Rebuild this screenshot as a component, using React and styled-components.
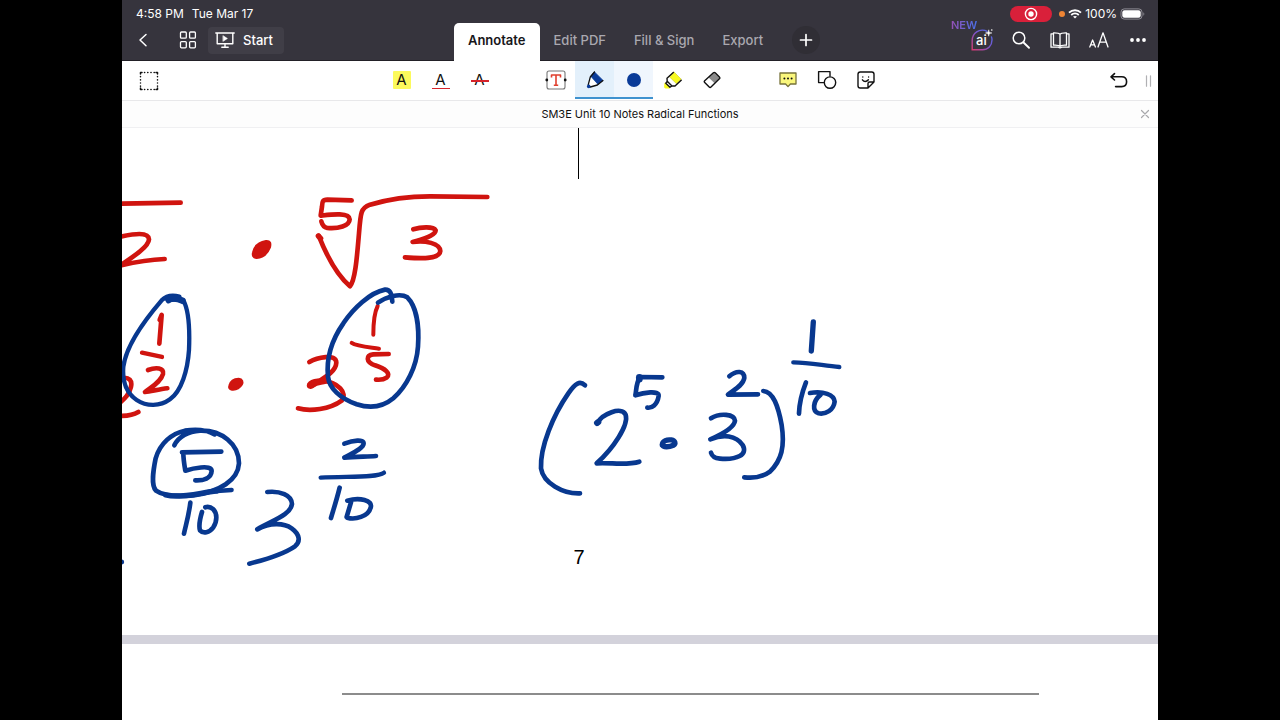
import React from "react";
import styled, { createGlobalStyle, css } from "styled-components";

const GlobalStyle = createGlobalStyle`
  *, *::before, *::after { box-sizing: border-box; }
  html, body { margin: 0; background: #000; }
  body { font-family: Inter, "Liberation Sans", sans-serif; font-size: 13px; color: #111; }
  button { font: inherit; color: inherit; border: 0; padding: 0; background: none; cursor: pointer; }
  svg { display: block; }
`;

const Letterbox = styled.div`
  min-height: 100vh;
  padding: 0 122px;
  background: #000;
`;

const Screen = styled.div`
  position: relative;
  display: flex;
  flex-direction: column;
  height: 100vh;
  overflow: hidden;
  background: #fff;
`;

const Header = styled.header`
  flex: none;
  background: #36343d;
  color: #fff;
  border-bottom: 1px solid #222027;
`;

const StatusBar = styled.div`
  display: flex;
  align-items: center;
  justify-content: space-between;
  height: 23px;
  padding: 5px 13px 0 14px;
  font-size: 12px;
  line-height: 18px;
  font-weight: 400;
`;

const StatusGroup = styled.div`
  display: flex;
  align-items: center;
  gap: ${(p) => p.$gap}px;
`;

const RecordPill = styled.button`
  display: grid;
  place-items: center;
  width: 42px;
  height: 16px;
  margin-right: 4px;
  border-radius: 8px;
  background: #d9203a;
`;

const MicDot = styled.span`
  width: 6px;
  height: 6px;
  border-radius: 50%;
  background: #ee8434;
`;

const NavBar = styled.nav`
  display: grid;
  grid-template-columns: 1fr auto 1fr;
  height: 37px;
  padding: 0 1px;
`;

const NavSide = styled.div`
  display: flex;
  align-items: center;
  justify-content: ${(p) => (p.$end ? "flex-end" : "flex-start")};
  padding-bottom: 4px;
`;

const NavButton = styled.button`
  position: relative;
  display: grid;
  place-items: center;
  width: 39px;
  height: 34px;
`;

const NavLeading = styled.div`
  display: flex;
  gap: 6px;
  margin-right: 1px;
`;

const StartButton = styled.button`
  display: flex;
  align-items: center;
  gap: 8px;
  height: 27px;
  padding: 0 11px 0 7px;
  border-radius: 4px;
  background: #403e47;
  font-weight: 500;
`;

const NewBadge = styled.span`
  position: absolute;
  top: -4px;
  left: -11px;
  font-size: 11px;
  line-height: 12px;
  font-weight: 600;
  color: transparent;
  background: linear-gradient(90deg, #9650b4, #4a70e8);
  background-clip: text;
`;

const Tabs = styled.div`
  display: flex;
  align-items: stretch;
  margin-right: 6px;
`;

const Tab = styled.button`
  padding: 0 14px 4px;
  line-height: 20px;
  font-weight: 500;
  color: #aaa8b0;
  ${(p) =>
    p.$active &&
    css`
      background: #fff;
      color: #17161a;
      font-weight: 600;
      border-radius: 5px 5px 0 0;
      margin-bottom: -1px;
      padding-bottom: 5px;
    `}
`;

const AddButton = styled.button`
  display: grid;
  place-items: center;
  align-self: flex-start;
  width: 28px;
  height: 28px;
  margin: 3px 0 0 15px;
  border-radius: 50%;
  background: #302e35;
`;

const Toolbar = styled.div`
  flex: none;
  display: grid;
  grid-template-columns: 1fr auto 1fr;
  height: 40px;
  padding: 0 0 0 7px;
  border-bottom: 1px solid #e8e8ea;
`;

const ToolSide = styled.div`
  display: flex;
  align-items: center;
  justify-content: ${(p) => (p.$end ? "flex-end" : "flex-start")};
`;

const ToolGroups = styled.div`
  display: flex;
  gap: 37px;
  margin-right: 20px;
`;

const ToolGroup = styled.div`
  display: flex;
`;

const ToolButton = styled.button`
  display: grid;
  place-items: center;
  width: ${(p) => (p.$narrow ? 20 : 39)}px;
  height: 38px;
  ${(p) =>
    p.$tint &&
    css`
      background: ${p.$tint};
      border-bottom: 2px solid #3f92cf;
      padding-top: 2px;
    `}
`;

const DocumentBar = styled.div`
  flex: none;
  display: grid;
  grid-template-columns: 1fr auto 1fr;
  align-items: center;
  height: 27px;
  border-bottom: 1px solid #f0f0f2;
  background: #fdfdfd;
`;

const DocumentTitle = styled.h1`
  grid-column: 2;
  margin: 0;
  font-size: 11px;
  line-height: 16px;
  font-weight: 400;
`;

const CloseButton = styled.button`
  justify-self: end;
  display: grid;
  place-items: center;
  width: 26px;
  height: 26px;
`;

const Viewer = styled.main`
  flex: 1;
  min-height: 0;
  overflow: hidden;
`;

const Sheet = styled.section`
  position: relative;
  height: 507px;
  padding-left: 456px;
  overflow: hidden;
`;

const ColumnRule = styled.div`
  width: 1px;
  height: 51px;
  background: #000;
`;

const PageNumber = styled.p`
  width: 12px;
  margin: 366px 0 0 -5px;
  font-family: "Liberation Sans", Arial, sans-serif;
  font-size: 20px;
  line-height: 24px;
  text-align: center;
  color: #000;
`;

const Ink = styled.svg`
  position: absolute;
  top: 0;
  left: 0;
  fill: none;
  stroke-linecap: round;
  stroke-linejoin: round;
`;

const PageGap = styled.div`
  height: 9px;
  background: #d3d2db;
`;

const NextSheet = styled.section`
  padding: 49px 119px 0 220px;
`;

const HeadRule = styled.hr`
  height: 2px;
  margin: 0;
  border: 0;
  background: #8c8c8c;
`;

const RED = "#d0140f";
const BLUE = "#08388f";

const inkBlocks = [
  {
    at: [-2, 52],
    strokes: [
      [RED, 14, "M0 71L182 68"],
      [RED, 14, "M0 170C40 162 86 154 87 178C86 200 40 230 0 257C50 245 90 239 134 237"],
      [RED, 14, "M125 405L119 420M125 405L118 491"],
      [RED, 13, "M66 518L126 531"],
      [RED, 14, "M84 570C108 561 133 563 129 582C123 605 98 618 75 636C95 633 120 628 142 625"],
      [RED, 14, "M5 594C28 590 37 602 33 620C28 643 15 655 0 668M0 708C20 708 40 705 55 696"],
      [RED, 8, "M400 218C404 200 418 187 438 184C450 183 452 190 449 202C442 220 428 232 410 233C400 232 398 226 400 218Z", true],
      [RED, 8, "M329 617C332 605 342 597 356 597C367 598 368 606 365 613C358 624 346 629 336 628C329 627 327 623 329 617Z", true],
      [BLUE, 13, "M145 364C155 355 170 360 190 361C206 390 210 440 207 510C203 570 185 632 150 658C120 680 80 680 50 660C20 640 6 610 10 560C18 500 70 425 125 361C140 346 160 345 178 350"],
      [BLUE, 20, "M145 358C160 353 172 354 187 362"],
    ],
  },
  {
    at: [168, 52],
    strokes: [
      [RED, 14, "M185 61L112 59C97 59 97 65 96 80L92 107C120 104 178 96 179 118C178 138 145 147 112 144C98 141 96 132 94 124"],
      [RED, 14, "M86 167C105 215 135 280 180 319C196 300 201 230 207 160C212 95 213 84 240 74C300 56 360 49 420 49L592 51"],
      [RED, 16, "M85 168L92 175"],
      [RED, 14, "M370 148C390 142 430 138 437 151C438 165 400 178 368 186C405 180 450 190 451 213C448 240 390 236 345 232"],
      [RED, 12, "M263 378C252 400 250 430 250 464"],
      [RED, 12, "M185 489C200 500 240 502 267 506"],
      [RED, 14, "M296 522L250 523C228 526 226 545 255 556C285 566 304 580 290 593C280 600 268 600 258 599"],
      [RED, 14, "M58 546C80 533 139 519 139 548C138 575 105 592 62 620C50 618 60 602 95 602C145 606 174 640 155 662C120 688 60 695 24 685"],
      [RED, 20, "M66 615C80 604 95 606 104 602"],
      [BLUE, 14, "M264 368C290 350 330 338 352 352C380 380 388 440 384 500C380 560 350 620 310 655C280 680 240 686 200 673C150 655 118 625 114 590C108 530 125 480 160 430C190 385 240 338 285 329C300 328 305 340 307 365"],
    ],
  },
  {
    at: [-2, 292],
    strokes: [
      [BLUE, 14, "M163 76C175 50 205 34 240 32C305 30 357 72 357 130C354 180 300 215 220 226C170 230 130 228 108 212C92 195 100 150 107 115C120 70 155 40 195 32C230 26 260 30 284 43"],
      [BLUE, 16, "M137 225C180 236 240 218 290 213"],
      [BLUE, 13, "M290 213L335 210"],
      [BLUE, 14, "M186 97L304 95M190 99C190 118 193 134 196 152C215 146 275 132 275 153C274 175 250 182 226 181"],
      [BLUE, 14, "M211 248C206 290 196 320 192 341"],
      [BLUE, 14, "M246 276C240 296 236 318 240 331C250 342 268 338 280 322C292 304 292 280 280 268C272 261 262 260 256 262"],
      [BLUE, 14, "M442 216C480 212 515 225 516 252C512 285 460 300 412 328C450 308 490 308 515 325C540 343 542 365 525 379C490 403 440 418 388 431"],
      [BLUE, 14, "M673 71C700 61 731 57 731 71C730 85 700 98 673 113C705 110 740 110 768 108"],
      [BLUE, 13, "M602 173C680 168 770 174 792 158"],
      [BLUE, 14, "M659 203C650 240 640 270 633 294"],
      [BLUE, 14, "M693 247L680 291M682 242C718 232 760 240 752 263C745 290 705 300 682 293"],
      [BLUE, 15, "M4 426L5 426"],
    ],
  },
  {
    at: [408, 182],
    strokes: [
      [BLUE, 14, "M165 226C150 212 137 218 115 250C70 315 30 410 33 475C40 520 100 552 150 550"],
      [BLUE, 14, "M202 340C215 312 275 288 287 314C297 345 250 415 200 460C240 457 290 467 328 455"],
      [BLUE, 18, "M201 339L205 336"],
      [BLUE, 14, "M397 202L330 201C317 222 320 240 316 256C340 248 388 240 386 258C382 285 365 295 352 293"],
      [BLUE, 20, "M328 202L328 208"],
      [BLUE, 16, "M397 405C397 392 412 388 424 390C436 392 438 402 430 406C416 412 400 412 397 405"],
      [BLUE, 14, "M543 325C570 308 613 312 615 332C613 352 575 373 541 388C580 372 618 376 638 405C655 435 620 450 570 446C548 444 545 435 543 428"],
      [BLUE, 14, "M598 199C620 180 643 182 643 204C640 225 612 240 594 254L684 253"],
      [BLUE, 14, "M700 243C730 245 745 290 755 345C765 410 755 450 720 485C700 500 670 505 643 502"],
      [BLUE, 16, "M850 36L844 123"],
      [BLUE, 13, "M790 157C840 157 880 167 928 171"],
      [BLUE, 14, "M828 217C815 250 808 280 807 311"],
      [BLUE, 14, "M840 249C880 242 913 254 914 275C911 300 887 314 866 310C846 304 848 274 872 254"],
    ],
  },
];

function Handwriting() {
  return (
    <Ink width="1036" height="507" viewBox="0 0 1036 507" role="img" aria-label="Handwritten radical and exponent working">
      {inkBlocks.map(({ at, strokes }, i) => (
        <g key={i} transform={`translate(${at[0]} ${at[1]}) scale(0.3333)`}>
          {strokes.map(([color, width, d, solid], j) => (
            <path key={j} d={d} stroke={color} strokeWidth={width} fill={solid ? color : "none"} />
          ))}
        </g>
      ))}
    </Ink>
  );
}

const Icon = ({ w = 20, h = 20, children, stroke = "currentColor", sw = 1.3 }) => (
  <svg width={w} height={h} viewBox={`0 0 ${w} ${h}`} fill="none" stroke={stroke} strokeWidth={sw} strokeLinecap="round" strokeLinejoin="round" aria-hidden="true">
    {children}
  </svg>
);

const Letter = styled.span`
  position: relative;
  display: grid;
  place-items: center;
  width: 18px;
  height: 18px;
  font-size: 15px;
  line-height: 18px;
  color: #111;
  background: ${(p) => p.$fill || "none"};
  border-radius: 1px;
  ${(p) =>
    p.$line &&
    css`
      &::after {
        content: "";
        position: absolute;
        left: 0;
        right: 0;
        top: ${p.$line};
        height: ${p.$thick || "1px"};
        background: #d6232a;
      }
    `}
`;

export default function App() {
  return (
    <Letterbox>
      <GlobalStyle />
      <Screen>
        <Header>
          <StatusBar>
            <StatusGroup $gap={8}>
              <span>4:58 PM</span>
              <span>Tue Mar 17</span>
            </StatusGroup>
            <StatusGroup $gap={3}>
              <RecordPill aria-label="Screen recording">
                <Icon w={14} h={14} sw={1.4}>
                  <circle cx="7" cy="7" r="5.6" />
                  <circle cx="7" cy="7" r="2.7" fill="#fff" stroke="none" />
                </Icon>
              </RecordPill>
              <MicDot />
              <svg width="14" height="10" viewBox="0 0 14 10" fill="none" stroke="#fff" strokeWidth="1.8" aria-hidden="true">
                <path d="M1 3.7C4.4.4 9.6.4 13 3.7M3.2 6C5.4 4 8.6 4 10.8 6" />
                <path d="M7 9.6L5 7.6C6.1 6.7 7.9 6.7 9 7.6Z" fill="#fff" stroke="none" />
              </svg>
              <span>100%</span>
              <svg width="25" height="12" viewBox="0 0 25 12" fill="none" aria-hidden="true">
                <rect x="1" y=".9" width="21" height="10.2" rx="3.2" stroke="#8d8b93" />
                <rect x="2.3" y="2.2" width="18.4" height="7.6" rx="2.2" fill="#fff" />
                <path d="M23.4 4.2C24.6 4.8 24.6 7.2 23.4 7.8Z" fill="#8d8b93" />
              </svg>
            </StatusGroup>
          </StatusBar>
          <NavBar>
            <NavSide>
              <NavLeading>
                <NavButton aria-label="Back">
                  <Icon w={12} h={16} sw={1.5}><path d="M9 2.5L3 8L9 13.8" /></Icon>
                </NavButton>
                <NavButton aria-label="Pages">
                  <Icon w={18} h={18}>
                    <rect x="1.5" y="1" width="5.8" height="6.2" rx="1" />
                    <rect x="10.6" y="1" width="5.8" height="6.2" rx="1" />
                    <rect x="1.5" y="10.6" width="5.8" height="6.2" rx="1" />
                    <rect x="10.6" y="10.6" width="5.8" height="6.2" rx="1" />
                  </Icon>
                </NavButton>
              </NavLeading>
              <StartButton>
                <Icon w={20} h={18} sw={1.4}>
                  <path d="M.8 2H19.2M2.2 2V12.8H17.8V2M10 13V16M6.8 16.2H13.2" />
                  <path d="M8.2 4.8L12.4 7.5L8.2 10.2Z" fill="currentColor" strokeWidth=".6" />
                </Icon>
                Start
              </StartButton>
            </NavSide>
            <Tabs>
              <Tab $active>Annotate</Tab>
              <Tab>Edit PDF</Tab>
              <Tab>Fill &amp; Sign</Tab>
              <Tab>Export</Tab>
              <AddButton aria-label="Add tool">
                <Icon w={14} h={14} sw={1.7}><path d="M7 1.5V12.5M1.5 7H12.5" /></Icon>
              </AddButton>
            </Tabs>
            <NavSide $end>
              <NavButton aria-label="AI assistant">
                <NewBadge>NEW</NewBadge>
                <svg width="24" height="24" viewBox="0 0 24 24" fill="none" aria-hidden="true">
                  <defs>
                    <linearGradient id="ai" x1="0" y1="1" x2="1" y2="0">
                      <stop offset="0" stopColor="#d63b72" />
                      <stop offset=".55" stopColor="#7656cf" />
                      <stop offset="1" stopColor="#4a70e8" />
                    </linearGradient>
                  </defs>
                  <path d="M17 3.4C14.5 1.7 10 1.6 6.7 3.8C3.5 6 2.2 9 2.2 12.5V21.8H12.5C18 21.8 22 17.5 22 12C22 10.8 21.8 9.8 21.5 9" stroke="url(#ai)" strokeWidth="1.4" strokeLinecap="round" />
                  <path d="M18.7 1.8C19 4.3 19.4 4.6 21.9 5C19.4 5.4 19 5.8 18.7 8.2C18.4 5.8 18 5.4 15.5 5C18 4.6 18.4 4.3 18.7 1.8Z" fill="#fff" stroke="#fff" strokeWidth=".5" />
                  <circle cx="21.8" cy="2" r=".8" fill="#fff" />
                  <text x="6" y="17" fill="#fff" fontFamily="Inter, sans-serif" fontSize="13" fontWeight="500">ai</text>
                </svg>
              </NavButton>
              <NavButton aria-label="Search">
                <Icon w={20} h={20} sw={1.5}><circle cx="8" cy="8" r="5.8" /><path d="M12.3 12.3L18 17.8" strokeWidth="1.9" /></Icon>
              </NavButton>
              <NavButton aria-label="Reading view">
                <Icon w={20} h={18} sw={1.3}>
                  <path d="M10 3.2C9 1.7 7.5 1.7 3.5 1.8V14.2C7 14 9 14 10 15.4C11 14 13 14 16.5 14.2V1.8C12.5 1.7 11 1.7 10 3.2ZM10 3.2V15.4" />
                  <path d="M3.5 2.8H1V16.2H8.6C9.3 17 10.7 17 11.4 16.2H19V2.8H16.5" />
                </Icon>
              </NavButton>
              <NavButton aria-label="Text size">
                <Icon w={20} h={18} sw={1.3}>
                  <path d="M.8 16L3.6 9L6.4 16M1.8 13.8H5.4M9 16L14 1.8L19 16M10.8 11.2H17.2" />
                </Icon>
              </NavButton>
              <NavButton aria-label="More">
                <Icon w={18} h={6}>
                  <g fill="currentColor" stroke="none"><circle cx="3" cy="3" r="1.9" /><circle cx="9" cy="3" r="1.9" /><circle cx="15" cy="3" r="1.9" /></g>
                </Icon>
              </NavButton>
            </NavSide>
          </NavBar>
        </Header>

        <Toolbar role="toolbar" aria-label="Annotation tools">
          <ToolSide>
            <ToolButton aria-label="Select area">
              <Icon w={20} h={20} sw={1.5}>
                <path d="M1.5 3V1.5H3M17 1.5H18.5V3M18.5 17V18.5H17M3 18.5H1.5V17" />
                <path d="M5.5 1.5H16M5.5 18.5H16M1.5 5.5V16M18.5 5.5V16" strokeDasharray="0.2 3" />
              </Icon>
            </ToolButton>
          </ToolSide>
          <ToolGroups>
            <ToolGroup>
              <ToolButton aria-label="Highlight text"><Letter $fill="#fcfa5c">A</Letter></ToolButton>
              <ToolButton aria-label="Underline text"><Letter $line="17px">A</Letter></ToolButton>
              <ToolButton aria-label="Strike out text"><Letter $line="9px" $thick="2px">A</Letter></ToolButton>
            </ToolGroup>
            <ToolGroup>
              <ToolButton aria-label="Text box">
                <Icon w={22} h={20}>
                  <rect x="2" y="1" width="18" height="18" rx="2" stroke="#777" strokeWidth="1.1" />
                  <path d="M6.5 7.5V5H15.5V7.5M11 5V15M8.8 15.2H13.2" stroke="#e0402f" strokeWidth="1.6" strokeLinecap="butt" />
                  <circle cx="1.8" cy="10" r="1.4" fill="#111" stroke="none" />
                  <circle cx="20.2" cy="10" r="1.4" fill="#111" stroke="none" />
                </Icon>
              </ToolButton>
              <ToolButton aria-label="Pen" aria-pressed="true" $tint="#e3f0fb">
                <Icon w={18} h={18} sw={1.3}>
                  <path d="M4.6 6.2L2.2 13.8L4.3 16L11.4 14Z" fill="#fff" stroke="none" />
                  <path d="M8.5 1L17 9.4L12 13.2L5 5.4Z" fill="#0a3b98" stroke="#0a3b98" strokeWidth=".8" />
                  <path d="M8.5 1L4.3 6L2.2 13.8L4.3 16L11.4 14L17 9.6" />
                  <circle cx="2.7" cy="15.4" r="1.8" fill="#0a3b98" stroke="none" />
                </Icon>
              </ToolButton>
              <ToolButton aria-label="Pen colour" $tint="#f0f6fd">
                <svg width="14" height="14" viewBox="0 0 14 14" aria-hidden="true"><circle cx="7" cy="7" r="7" fill="#0a3b98" /></svg>
              </ToolButton>
              <ToolButton aria-label="Highlighter">
                <Icon w={18} h={18} sw={1.4}>
                  <path d="M10 1L17.2 8.2L12.4 12.6L5.6 6Z" fill="#f8fa1e" stroke="#c9cc19" strokeWidth=".6" />
                  <path d="M1 12.4L5.4 16.8H1.6C.9 16.6.6 16 .9 15.4Z" fill="#f8fa1e" stroke="#f8fa1e" />
                  <path d="M9.3 1.4L3 7.2L3.2 10.3L8 15L11 15L17.2 9.2M3.2 10.3L1.8 12.2L6 16.2L8 15" />
                </Icon>
              </ToolButton>
              <ToolButton aria-label="Eraser">
                <Icon w={18} h={18} sw={1.4}>
                  <path d="M11 1.6L16.6 7L11.4 12L5.6 6.4Z" fill="#8a8a8a" stroke="none" />
                  <path d="M10.4 1.8C11 1.3 11.6 1.3 12.2 1.8L16.4 6C17 6.6 17 7.2 16.4 7.8L8 16C7.4 16.6 6.8 16.6 6.2 16L1.7 11.5C1.1 10.9 1.1 10.3 1.7 9.7Z" />
                </Icon>
              </ToolButton>
            </ToolGroup>
            <ToolGroup>
              <ToolButton aria-label="Comment">
                <Icon w={20} h={18} sw={1.3}>
                  <path d="M2 2H18V13H12.4L10 15.6L7.6 13H2Z" fill="#faf77c" stroke="#77733a" />
                  <g fill="#111" stroke="none"><circle cx="6.4" cy="7.4" r="1" /><circle cx="10" cy="7.4" r="1" /><circle cx="13.6" cy="7.4" r="1" /></g>
                </Icon>
              </ToolButton>
              <ToolButton aria-label="Shapes">
                <Icon w={20} h={20} sw={1.4}><path d="M7 12.6H1.6V1.6H13V6" /><circle cx="13" cy="12.6" r="5.7" /></Icon>
              </ToolButton>
              <ToolButton aria-label="Sticker">
                <Icon w={18} h={18} sw={1.4}>
                  <path d="M11 17H3.2C2 17 1 16 1 14.8V3.2C1 2 2 1 3.2 1H14.8C16 1 17 2 17 3.2V11L11 17V12.6C11 11.6 11.6 11 12.6 11H17M5.4 8.8C7 11 9.4 11 11.4 8.8" />
                  <path d="M5.8 5.9V6.1M11.6 5.9V6.1" />
                </Icon>
              </ToolButton>
            </ToolGroup>
          </ToolGroups>
          <ToolSide $end>
            <ToolButton aria-label="Undo">
              <Icon w={20} h={18} sw={1.6}><path d="M5.5 1.6L2 4.8L5.5 8M2.2 4.8H12.6C15.6 4.8 17.6 6.8 17.6 9.7C17.6 12.6 15.6 14.6 12.6 14.6H6.6" /></Icon>
            </ToolButton>
            <ToolButton $narrow aria-label="Move toolbar">
              <Icon w={12} h={12} stroke="#b0b0b3" sw={1.2}><path d="M4.5.8V11.2M8.5.8V11.2" /></Icon>
            </ToolButton>
          </ToolSide>
        </Toolbar>

        <DocumentBar>
          <DocumentTitle>SM3E Unit 10 Notes Radical Functions</DocumentTitle>
          <CloseButton aria-label="Close document">
            <Icon w={10} h={10} stroke="#a8a8ab" sw={1.2}><path d="M1.5 1.5L8.5 8.5M8.5 1.5L1.5 8.5" /></Icon>
          </CloseButton>
        </DocumentBar>

        <Viewer>
          <Sheet>
            <ColumnRule />
            <PageNumber>7</PageNumber>
            <Handwriting />
          </Sheet>
          <PageGap />
          <NextSheet>
            <HeadRule />
          </NextSheet>
        </Viewer>
      </Screen>
    </Letterbox>
  );
}
